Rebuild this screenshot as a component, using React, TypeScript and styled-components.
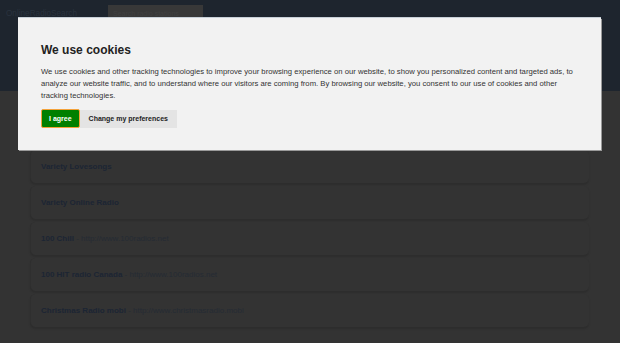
import React from 'react';
import styled, { createGlobalStyle } from 'styled-components';

const GlobalStyle = createGlobalStyle`
  html, body {
    margin: 0;
    padding: 0;
    background: #333333;
    font-family: "Liberation Sans", Arial, sans-serif;
  }
`

const Page = styled.div`
  width: 620px;
  height: 343px;
  overflow: hidden;
  position: relative;
  background: #333333;
`

const Header = styled.header`
  height: 91px;
  background: #1e252e;
  display: flex;
  align-items: flex-start;
  padding: 5px 0 0 6px;
  box-sizing: border-box;
  gap: 31px;
`

const Brand = styled.div`
  font-size: 8.2px;
  color: #2a333e;
  margin-top: 4px;
  line-height: 10px;
`

const SearchBox = styled.div`
  width: 95px;
  height: 24px;
  background: #383838;
  font-size: 7px;
  color: #404040;
  padding: 5px 5px;
  box-sizing: border-box;
  white-space: nowrap;
  overflow: hidden;
`

const Stations = styled.ul`
  list-style: none;
  margin: 0;
  padding: 23px 31px 0 30px;
  display: flex;
  flex-direction: column;
  gap: 3px;
`

const Card = styled.li`
  height: 33px;
  border-radius: 5px;
  background: #333333;
  border-left: 1px solid #2f2f2f;
  box-shadow: 0 2px 2px rgba(0, 0, 0, 0.12);
  display: flex;
  align-items: center;
  padding-left: 10px;
  font-size: 8px;
  color: #252b33;
`

const Name = styled.b`
  color: #1c2533;
`

const Overlay = styled.div`
  position: absolute;
  top: 18px;
  left: 18px;
  width: 583px;
  background: #f2f2f2;
  box-shadow: 1px 1px 0 #9a9a9a, 0 -1px 0 #c8d0d8;
  padding: 25px 23px 22px 23px;
  box-sizing: border-box;
  color: #333;
`

const Title = styled.h2`
  margin: 0;
  font-size: 12px;
  line-height: 14px;
  font-weight: bold;
  color: #222;
`

const Text = styled.p`
  margin: 9px 0 7px;
  font-size: 7.7px;
  line-height: 12px;
  color: #333;
`

const Actions = styled.div`
  display: flex;
  align-items: center;
`

const Button = styled.button<{ primary?: boolean }>`
  font-family: "Liberation Sans", Arial, sans-serif;
  font-size: 7px;
  font-weight: bold;
  height: ${p => (p.primary ? '19px' : '18px')};
  padding: 0 ${p => (p.primary ? '7px' : '9px')};
  border: ${p => (p.primary ? '1px solid #f4a23a' : 'none')};
  border-radius: ${p => (p.primary ? '2px' : '0')};
  background: ${p => (p.primary ? '#008000' : '#e4e4e4')};
  color: ${p => (p.primary ? '#ffffff' : '#222222')};
  cursor: pointer;
`

const stations = [
  { name: 'Variety Hits', url: '' },
  { name: 'Variety Lovesongs', url: '' },
  { name: 'Variety Online Radio', url: '' },
  { name: '100 Chill', url: 'http://www.100radios.net' },
  { name: '100 HIT radio Canada', url: 'http://www.100radios.net' },
  { name: 'Christmas Radio mobi', url: 'http://www.christmasradio.mobi' },
]

const App: React.FC = () => {
  return (
    <>
      <GlobalStyle />
      <Page>
        <Header>
          <Brand>OnlineRadioSearch</Brand>
          <SearchBox>Search radio stations</SearchBox>
        </Header>
        <Stations>
          {stations.map(item => (
            <Card key={item.name}>
              <Name>{item.name}</Name>
              {item.url && <>&nbsp;- {item.url}</>}
            </Card>
          ))}
        </Stations>
        <Overlay>
          <Title>We use cookies</Title>
          <Text>
            We use cookies and other tracking technologies to improve your browsing experience on our website, to show you personalized content and targeted ads, to analyze our website traffic, and to understand where our visitors are coming from. By browsing our website, you consent to our use of cookies and other tracking technologies.
          </Text>
          <Actions>
            <Button primary type="button">I agree</Button>
            <Button type="button">Change my preferences</Button>
          </Actions>
        </Overlay>
      </Page>
    </>
  )
}

export default App
